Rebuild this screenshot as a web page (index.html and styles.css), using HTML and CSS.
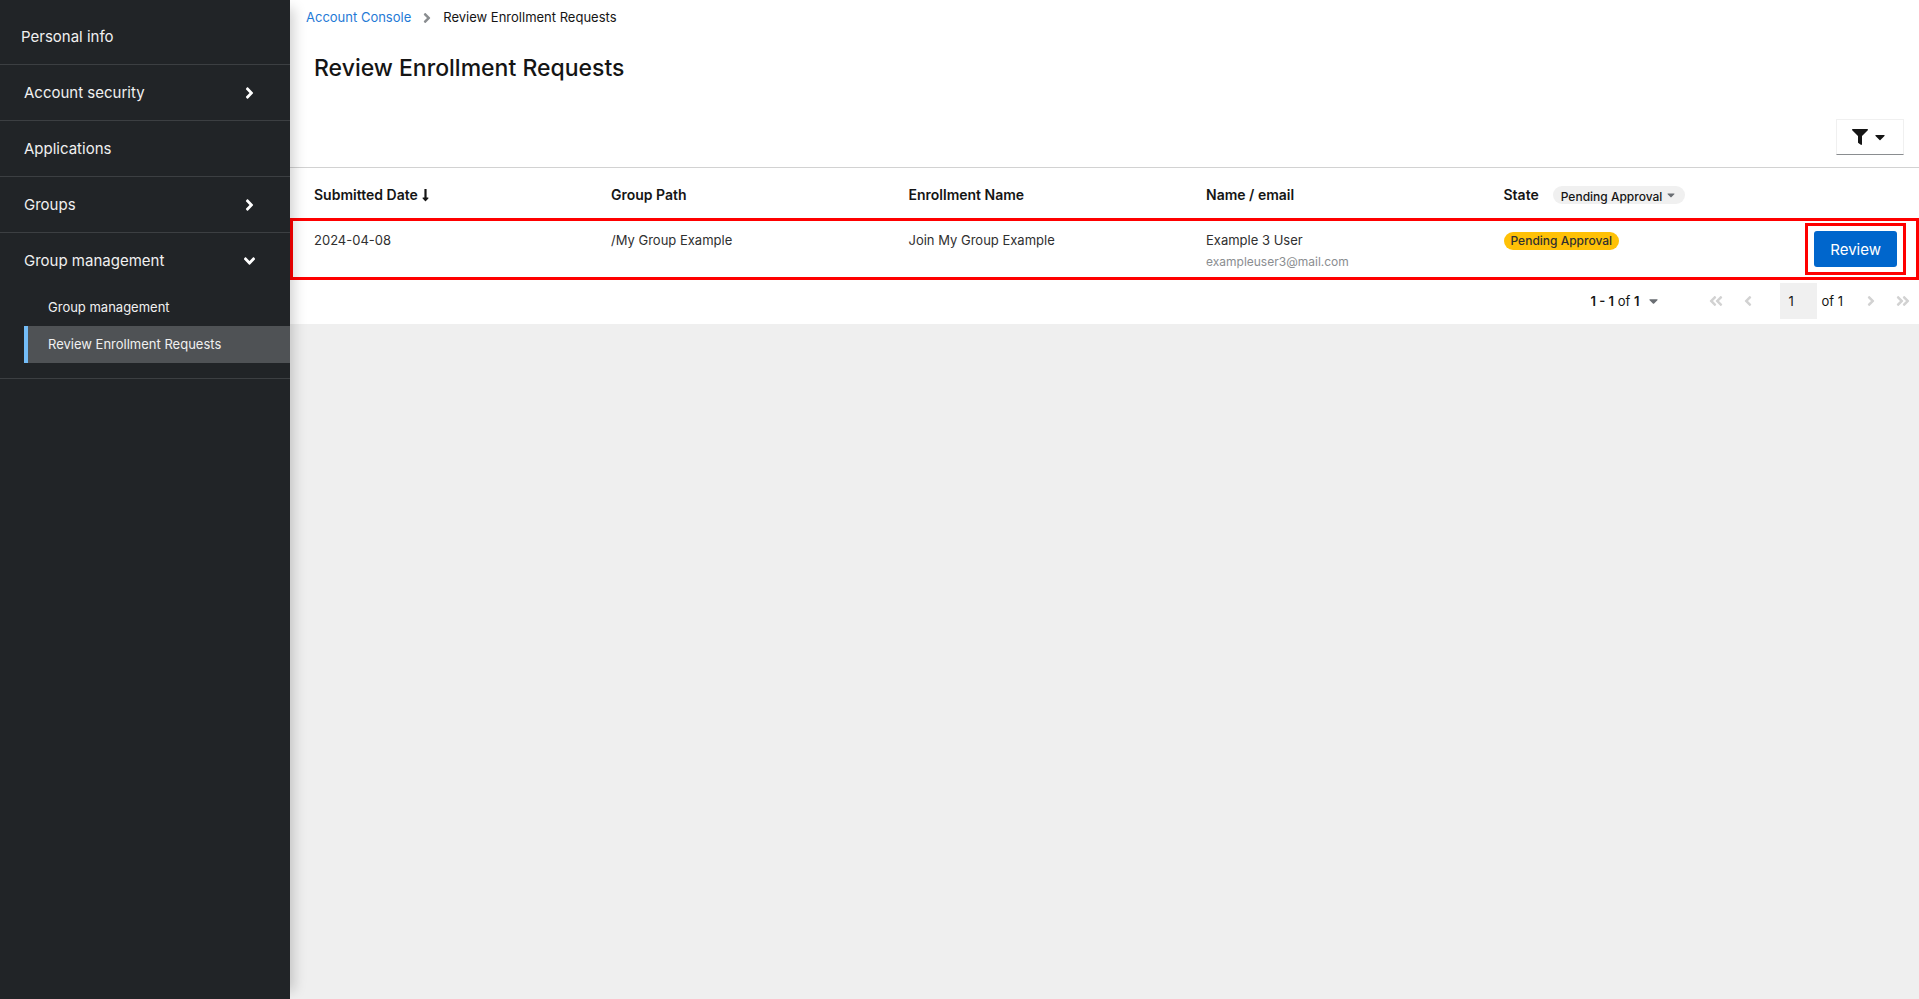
FILE: index.html
```html
<!DOCTYPE html>
<html lang="en">
<head>
<meta charset="utf-8">
<meta name="viewport" content="width=device-width, initial-scale=1">
<title>Review Enrollment Requests</title>
<link rel="stylesheet" href="styles.css">
</head>
<body>
<svg class="sprite" aria-hidden="true">
  <symbol id="angle" viewBox="0 0 256 512"><path d="M224.3 273l-136 136c-9.4 9.4-24.6 9.4-33.9 0l-22.6-22.6c-9.4-9.4-9.4-24.6 0-33.9l96.4-96.4-96.4-96.4c-9.4-9.4-9.4-24.6 0-33.9L54.3 103c9.4-9.4 24.6-9.4 33.9 0l136 136c9.5 9.4 9.5 24.6.1 34z"/></symbol>
  <symbol id="angle-double" viewBox="0 0 448 512"><path d="M224.3 273l-136 136c-9.4 9.4-24.6 9.4-33.9 0l-22.6-22.6c-9.4-9.4-9.4-24.6 0-33.9l96.4-96.4-96.4-96.4c-9.4-9.4-9.4-24.6 0-33.9L54.3 103c9.4-9.4 24.6-9.4 33.9 0l136 136c9.5 9.4 9.5 24.6.1 34zm192-34l-136-136c-9.4-9.4-24.6-9.4-33.9 0l-22.6 22.6c-9.4 9.4-9.4 24.6 0 33.9l96.4 96.4-96.4 96.4c-9.4 9.4-9.4 24.6 0 33.9l22.6 22.6c9.4 9.4 24.6 9.4 33.9 0l136-136c9.4-9.2 9.4-24.4 0-33.8z"/></symbol>
  <symbol id="caret" viewBox="0 0 320 512"><path d="M31.3 192h257.3c17.8 0 26.7 21.5 14.1 34.1L174.1 354.8c-7.8 7.8-20.5 7.8-28.3 0L17.2 226.1C4.6 213.5 13.5 192 31.3 192z"/></symbol>
  <symbol id="filter" viewBox="0 0 512 512"><path d="M487.976 0H24.028C2.71 0-8.047 25.866 7.058 40.971L192 225.941V432c0 7.831 3.821 15.17 10.237 19.662l80 55.98C298.02 518.69 320 507.493 320 487.98V225.941l184.947-184.97C520.021 25.896 509.338 0 487.976 0z"/></symbol>
  <symbol id="arrow-down" viewBox="0 0 256 512"><path d="M168 345.941V44c0-6.627-5.373-12-12-12h-56c-6.627 0-12 5.373-12 12v301.941H41.941c-21.382 0-32.09 25.851-16.971 40.971l86.059 86.059c9.373 9.373 24.569 9.373 33.941 0l86.059-86.059c15.119-15.119 4.411-40.971-16.971-40.971H168z"/></symbol>
</svg>

<div class="page">
  <nav class="sidebar" aria-label="Account">
    <ul class="nav">
      <li class="nav-item nav-item-first"><a class="nav-link" href="#">Personal info</a></li>
      <li class="nav-item"><button class="nav-link" type="button" aria-expanded="false">Account security<svg class="nav-icon"><use href="#angle"/></svg></button></li>
      <li class="nav-item"><a class="nav-link" href="#">Applications</a></li>
      <li class="nav-item"><button class="nav-link" type="button" aria-expanded="false">Groups<svg class="nav-icon"><use href="#angle"/></svg></button></li>
      <li class="nav-item">
        <button class="nav-link" type="button" aria-expanded="true">Group management<svg class="nav-icon nav-icon-open"><use href="#angle"/></svg></button>
        <ul class="subnav">
          <li><a class="subnav-link" href="#">Group management</a></li>
          <li><a class="subnav-link subnav-current" href="#" aria-current="page">Review Enrollment Requests</a></li>
        </ul>
      </li>
    </ul>
  </nav>

  <main class="main">
    <section class="panel">
      <nav class="breadcrumb" aria-label="Breadcrumb">
        <a class="crumb-link" href="#">Account Console</a>
        <svg class="crumb-icon"><use href="#angle"/></svg>
        <span>Review Enrollment Requests</span>
      </nav>
      <h1 class="title">Review Enrollment Requests</h1>
      <div class="toolbar">
        <button class="filter-button" type="button" aria-label="Filter">
          <svg class="filter-icon"><use href="#filter"/></svg>
          <svg class="filter-caret"><use href="#caret"/></svg>
        </button>
      </div>

      <table class="table">
        <colgroup>
          <col class="col-date"><col class="col-data"><col class="col-data"><col class="col-data"><col class="col-data"><col class="col-action">
        </colgroup>
        <thead>
          <tr>
            <th scope="col"><button class="sort" type="button">Submitted Date<svg class="sort-icon"><use href="#arrow-down"/></svg></button></th>
            <th scope="col">Group Path</th>
            <th scope="col">Enrollment Name</th>
            <th scope="col">Name / email</th>
            <th scope="col">
              <div class="state-head">
                <label for="state">State</label>
                <span class="chip">
                  <select class="chip-select" id="state"><option>Pending Approval</option></select>
                  <svg class="chip-caret"><use href="#caret"/></svg>
                </span>
              </div>
            </th>
            <td></td>
          </tr>
        </thead>
        <tbody>
          <tr class="row-marked">
            <td>2024-04-08</td>
            <td>/My Group Example</td>
            <td>Join My Group Example</td>
            <td>Example 3 User<div class="email">exampleuser3@mail.com</div></td>
            <td><span class="badge">Pending Approval</span></td>
            <td class="cell-action"><div class="action-marked"><button class="primary" type="button">Review</button></div></td>
          </tr>
        </tbody>
      </table>

      <div class="pagination">
        <button class="range" type="button"><span><b>1 - 1</b> of <b>1</b></span><svg class="caret"><use href="#caret"/></svg></button>
        <div class="pager">
          <button class="page-button" type="button" aria-label="First page" disabled><svg class="double-icon flip"><use href="#angle-double"/></svg></button>
          <button class="page-button" type="button" aria-label="Previous page" disabled><svg class="single-icon flip"><use href="#angle"/></svg></button>
          <div class="page-field"><input class="page-input" id="page" type="text" value="1" aria-label="Current page"><label for="page">of 1</label></div>
          <button class="page-button" type="button" aria-label="Next page" disabled><svg class="single-icon"><use href="#angle"/></svg></button>
          <button class="page-button" type="button" aria-label="Last page" disabled><svg class="double-icon"><use href="#angle-double"/></svg></button>
        </div>
      </div>
    </section>
  </main>
</div>
</body>
</html>
```

FILE: styles.css
```css
* { box-sizing: border-box; }

body {
  margin: 0;
  background: #efefef;
  color: #151515;
  font: 13px/21px Inter, "Open Sans", sans-serif;
}

button, input, select { font: inherit; color: inherit; }
button { margin: 0; padding: 0; border: 0; background: none; cursor: pointer; }
a { text-decoration: none; }
ul { margin: 0; padding: 0; list-style: none; }
svg { display: block; flex: none; fill: currentColor; }
.sprite { position: absolute; width: 0; height: 0; }

.page {
  display: grid;
  grid-template-columns: 290px minmax(0, 1fr);
  min-height: 100vh;
}

/* Sidebar */
.sidebar {
  position: relative;
  z-index: 1;
  background: #212427;
  color: #fff;
  box-shadow: 12px 0 12px -8px rgba(3, 3, 3, 0.18);
}
.nav-item { border-bottom: 1px solid #3c3f42; }
.nav-link {
  display: flex;
  align-items: center;
  justify-content: space-between;
  width: 100%;
  padding: 17px 36px 17px 24px;
  color: #f0f0f0;
  font-size: 15px;
  text-align: left;
}
.nav-item-first { padding-top: 9px; }
.nav-item-first .nav-link { padding-left: 21px; }
.nav-icon { width: 9px; height: 18px; color: #fff; }
.nav-icon-open { transform: rotate(90deg); }
.subnav { padding: 1px 0 15px; }
.subnav-link {
  display: block;
  margin-left: 24px;
  padding: 8px 16px 8px 20px;
  border-left: 4px solid transparent;
  color: #f0f0f0;
}
.subnav-current { border-left-color: #73bcf7; background: #4f5255; }

/* Heading */
.panel { background: #fff; }
.breadcrumb {
  display: flex;
  align-items: center;
  gap: 12px;
  padding: 7px 16px;
}
.crumb-link { color: #1f7ad6; }
.crumb-icon { width: 8px; height: 16px; color: #8a8d90; }
.title {
  margin: 0;
  padding: 17px 24px 0;
  font-size: 23px;
  font-weight: 500;
  line-height: 32px;
}
.toolbar {
  display: flex;
  justify-content: flex-end;
  padding: 35px 15px 12px;
  border-bottom: 1px solid #d2d2d2;
}
.filter-button {
  display: flex;
  align-items: center;
  gap: 7px;
  height: 36px;
  padding: 0 18px 0 15px;
  border: 1px solid #f0f0f0;
  border-bottom-color: #8a8d90;
}
.filter-icon { width: 16px; height: 16px; }
.filter-caret { width: 10px; height: 16px; }

/* Table */
.table {
  width: 100%;
  border-collapse: collapse;
  table-layout: fixed;
}
.col-date { width: 305px; }
.col-action { width: 134px; }
.table th, .table td {
  padding: 12px 0 8px 16px;
  text-align: left;
  vertical-align: top;
}
.table th { padding: 16px 0 13px 16px; font-size: 14px; font-weight: 600; }
.table th:first-child, .table td:first-child { padding-left: 24px; }
.table tbody { color: #303030; }
.sort { display: flex; align-items: center; gap: 4px; }
.sort-icon { width: 7px; height: 14px; }
.state-head { display: flex; align-items: center; gap: 14px; }
.chip { position: relative; display: flex; }
.chip-select {
  height: 18px;
  padding: 0 22px 0 8px;
  border: 0;
  border-radius: 9px;
  background: #f0f0f0;
  appearance: none;
  font-size: 12px;
  font-weight: 500;
}
.chip-caret {
  position: absolute;
  top: 3px;
  right: 10px;
  width: 8px;
  height: 12px;
  color: #6a6e73;
  pointer-events: none;
}
.email { color: #8a8d90; font-size: 12px; }
.badge {
  display: inline-block;
  padding: 0 7px;
  border-radius: 9px;
  background: #ffc107;
  font-size: 12px;
  font-weight: 500;
  line-height: 18px;
}
.row-marked { outline: 3px solid #f00; outline-offset: -3px; }
.table .cell-action { padding: 5px 13px 5px 0; }
.action-marked {
  width: fit-content;
  margin-left: auto;
  padding: 5px 6px;
  border: 3px solid #f00;
}
.primary {
  display: block;
  height: 36px;
  padding: 0 16px;
  border-radius: 3px;
  background: #06c;
  color: #fff;
  font-size: 15px;
}

/* Pagination */
.pagination {
  display: flex;
  align-items: center;
  justify-content: flex-end;
  gap: 42px;
  padding: 3px 0 5px;
}
.pagination b { font-weight: 600; }
.range { display: flex; align-items: center; gap: 10px; }
.caret { width: 9px; height: 14px; color: #6a6e73; }
.pager { display: flex; align-items: center; }
.page-button { display: grid; place-items: center; width: 32px; height: 36px; color: #d2d2d2; }
.single-icon { width: 8px; height: 16px; }
.double-icon { width: 14px; height: 16px; }
.flip { transform: rotate(180deg); }
.page-field { display: flex; align-items: center; gap: 4px; padding: 0 12px 0 16px; }
.page-input {
  width: 37px;
  height: 36px;
  padding: 0 18px 0 8px;
  border: 0;
  background: #f0f0f0;
}
```
